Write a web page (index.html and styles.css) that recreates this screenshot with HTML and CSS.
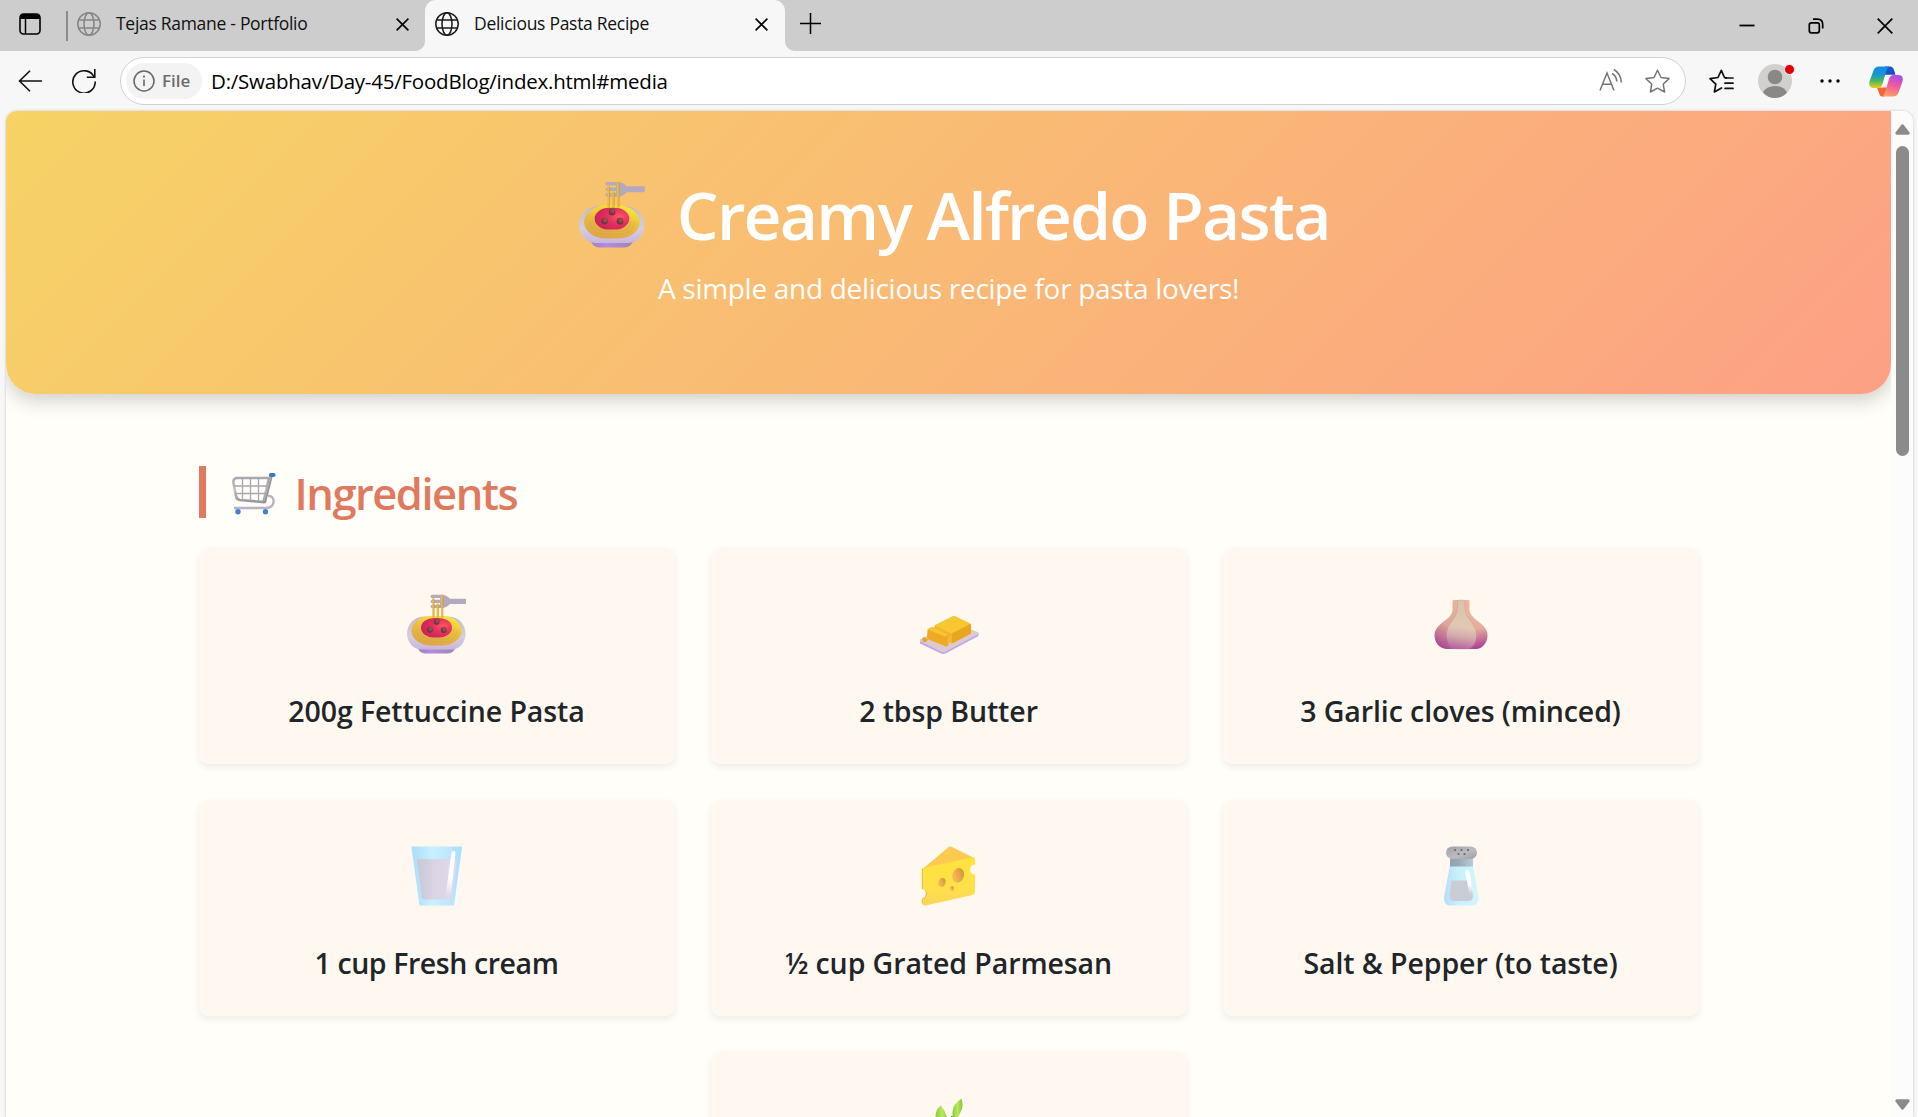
FILE: index.html
```html
<!DOCTYPE html>
<html lang="en">
<head>
<meta charset="utf-8">
<title>Delicious Pasta Recipe</title>
<link rel="stylesheet" href="styles.css">
</head>
<body>
<svg class="defs" width="0" height="0" aria-hidden="true">
  <defs>
    <linearGradient id="plate" x1="0" y1="0" x2="0" y2="1"><stop offset="0" stop-color="#c3bac9"/><stop offset=".6" stop-color="#d6cedf"/><stop offset="1" stop-color="#c9b6dc"/></linearGradient>
    <linearGradient id="base" x1="0" y1="0" x2="1" y2="0"><stop offset="0" stop-color="#9d7cc4"/><stop offset=".4" stop-color="#b48add"/><stop offset="1" stop-color="#9a85b4"/></linearGradient>
    <linearGradient id="noodle" x1=".4" y1="1" x2=".8" y2="0"><stop offset="0" stop-color="#dda646"/><stop offset=".5" stop-color="#e9bd42"/><stop offset="1" stop-color="#fdea32"/></linearGradient>
    <radialGradient id="sauce" cx=".72" cy=".4" r=".7"><stop offset="0" stop-color="#ff5567"/><stop offset=".5" stop-color="#e3305f"/><stop offset="1" stop-color="#cc2459"/></radialGradient>
    <radialGradient id="meat" cx=".6" cy=".35" r=".6"><stop offset="0" stop-color="#a05a50"/><stop offset="1" stop-color="#6d2f3a"/></radialGradient>
    <linearGradient id="metal" x1="0" y1="0" x2="0" y2="1"><stop offset="0" stop-color="#aaa7ad"/><stop offset=".5" stop-color="#c5c1c9"/><stop offset="1" stop-color="#99949d"/></linearGradient>
    <linearGradient id="garlicL" x1=".6" y1="0" x2=".3" y2="1"><stop offset="0" stop-color="#e8b39c"/><stop offset=".5" stop-color="#dda798"/><stop offset="1" stop-color="#a84493"/></linearGradient>
    <linearGradient id="garlicR" x1=".4" y1="0" x2=".5" y2="1"><stop offset="0" stop-color="#f0b79d"/><stop offset=".6" stop-color="#e6ad9b"/><stop offset="1" stop-color="#ad3f96"/></linearGradient>
    <linearGradient id="garlicM" x1=".55" y1="0" x2=".45" y2="1"><stop offset="0" stop-color="#d9c3a8"/><stop offset=".55" stop-color="#e2c8b3"/><stop offset=".75" stop-color="#d5a9ac"/><stop offset="1" stop-color="#b862a3"/></linearGradient>
    <linearGradient id="glass" x1="0" y1="0" x2="1" y2="0"><stop offset="0" stop-color="#a9dcfb"/><stop offset=".4" stop-color="#c8f0fe"/><stop offset=".75" stop-color="#bce8ff"/><stop offset="1" stop-color="#a6ddff"/></linearGradient>
    <linearGradient id="milk" x1="0" y1="0" x2="1" y2="0"><stop offset="0" stop-color="#c8c8d2"/><stop offset=".4" stop-color="#d9d3e4"/><stop offset="1" stop-color="#e0daea"/></linearGradient>
    <linearGradient id="shine" x1="0" y1="0" x2="0" y2="1"><stop offset="0" stop-color="#fff"/><stop offset=".6" stop-color="#fff"/><stop offset="1" stop-color="#fff" stop-opacity="0"/></linearGradient>
    <linearGradient id="cheese" x1="0" y1="0" x2="0" y2="1"><stop offset="0" stop-color="#ffe33c"/><stop offset=".6" stop-color="#ffe148"/><stop offset="1" stop-color="#fbd559"/></linearGradient>
    <linearGradient id="hole" x1="1" y1="0" x2="0" y2="1"><stop offset="0" stop-color="#c98a38"/><stop offset=".55" stop-color="#eead4c"/><stop offset="1" stop-color="#fcc566"/></linearGradient>
    <linearGradient id="cap" x1="0" y1="0" x2="1" y2="1"><stop offset="0" stop-color="#a3a1a8"/><stop offset=".55" stop-color="#bdbbc0"/><stop offset="1" stop-color="#98a0a9"/></linearGradient>
    <linearGradient id="neck" x1="0" y1="0" x2="1" y2="0"><stop offset="0" stop-color="#8fa3b1"/><stop offset=".4" stop-color="#96abba"/><stop offset="1" stop-color="#bccbd5"/></linearGradient>
    <linearGradient id="shaker" x1="0" y1="0" x2="1" y2="0"><stop offset="0" stop-color="#b7dcf9"/><stop offset=".4" stop-color="#c9effd"/><stop offset="1" stop-color="#d0f6ff"/></linearGradient>
    <linearGradient id="leaf" x1="0" y1="0" x2="1" y2="0"><stop offset="0" stop-color="#8ccd3d"/><stop offset=".5" stop-color="#b9e95e"/><stop offset="1" stop-color="#86c43c"/></linearGradient>
    <linearGradient id="cpBlue" x1="0" y1="0" x2="0" y2="1"><stop offset="0" stop-color="#188be6"/><stop offset=".35" stop-color="#1594d8"/><stop offset=".65" stop-color="#43b56b"/><stop offset="1" stop-color="#f0cd09"/></linearGradient>
    <linearGradient id="cpNavy" x1="0" y1="0" x2="1" y2="1"><stop offset="0" stop-color="#1b62d6"/><stop offset="1" stop-color="#1b44b8"/></linearGradient>
    <linearGradient id="cpPink" x1=".6" y1="0" x2=".3" y2="1"><stop offset="0" stop-color="#a64ef0"/><stop offset=".45" stop-color="#ee5a9c"/><stop offset="1" stop-color="#ffa066"/></linearGradient>

    <symbol id="pasta" viewBox="0 0 60 60">
      <path d="M25.500 .8H35Q39 .8 43 4.800H59V10H43Q39 14 35 14H25.500Q23.500 14 23.500 12.400T25.500 10.800H33V9H25.500Q23.500 9 23.500 7.400T25.500 5.800H33V4H25.500Q23.500 4 23.500 2.400T25.500 .8Z" fill="#b5a9bd"/>
      <path d="M7 50H52L46 57.500Q43.500 59.500 41 59.500H18Q15.500 59.500 13 57.500Z" fill="url(#base)"/>
      <path d="M17 22.500H41C52 22.500 58.500 31 58.500 39.500C58.500 48 53 55.500 44 55.500H14.500C6 55.500 0 48 0 39.500C0 31 6.500 22.500 17 22.500Z" fill="url(#plate)"/>
      <rect x="4.500" y="22" width="50" height="29.500" rx="20" ry="15" fill="url(#noodle)"/>
      <path d="M10 35C10 44 15 47.500 22 47.500H37C45 47.500 49.500 43 49.500 36M13 36C13 42 18 45 23 45H37C43 45 46.500 41 46.500 36" fill="none" stroke="#d39a3d" stroke-opacity=".45" stroke-width=".8"/>
      <g fill="none" stroke-width="1.700"><path d="M26.200 4V24M30.500 9.500V24M34.900 .5V24" stroke="#edbe35"/><path d="M27.300 5V23M31.600 10V23M36 1V23" stroke="#c1963c" stroke-width=".6"/></g>
      <rect x="14" y="24" width="31" height="19.500" rx="13" ry="9.750" fill="url(#sauce)"/>
      <g fill="url(#meat)"><circle cx="29.700" cy="27.700" r="3"/><circle cx="23" cy="35.800" r="3"/><circle cx="36.800" cy="36" r="3"/></g>
    </symbol>
  </defs>
</svg>

<div class="tabstrip">
  <svg class="workspace" width="22" height="22" viewBox="0 0 22 22"><rect x="1" y="1" width="20" height="20" rx="3.500" fill="none" stroke="#000" stroke-width="1.600"/><path d="M1 6V4Q1 1 4 1H18Q21 1 21 4V6Z"/><path d="M6.500 5V21" stroke="#000" stroke-width="1.500"/></svg>
  <span class="separator"></span>
  <div class="tab">
    <svg class="muted" width="24" height="24" viewBox="0 0 24 24" fill="none" stroke="currentColor" stroke-width="1.500"><circle cx="12" cy="12" r="11.200"/><ellipse cx="12" cy="12" rx="5" ry="11.200"/><path d="M1.500 8H22.500M1.500 16H22.500"/></svg>
    <span class="tab-title">Tejas Ramane - Portfolio</span>
    <svg class="close" width="13" height="13" viewBox="0 0 13 13"><path d="M.6 .6L12.400 12.400M12.400 .6L.6 12.400" stroke="#000" stroke-width="1.600"/></svg>
  </div>
  <div class="tab active">
    <svg width="24" height="24" viewBox="0 0 24 24" fill="none" stroke="#1b1b1b" stroke-width="1.500"><circle cx="12" cy="12" r="11.200"/><ellipse cx="12" cy="12" rx="5" ry="11.200"/><path d="M1.500 8H22.500M1.500 16H22.500"/></svg>
    <span class="tab-title">Delicious Pasta Recipe</span>
    <svg class="close" width="13" height="13" viewBox="0 0 13 13"><path d="M.6 .6L12.400 12.400M12.400 .6L.6 12.400" stroke="#000" stroke-width="1.600"/></svg>
  </div>
  <svg class="new-tab" width="21" height="21" viewBox="0 0 21 21"><path d="M10.500 0V21M0 10.500H21" stroke="#000" stroke-width="1.500"/></svg>
  <div class="window-controls">
    <svg width="16" height="16" viewBox="0 0 16 16"><path d="M.5 7.500H15.500" stroke="#000" stroke-width="1.800"/></svg>
    <svg width="16" height="16" viewBox="0 0 16 16" fill="none" stroke="#000" stroke-width="1.700"><rect x="1.300" y="4.800" width="10" height="10" rx="2"/><path d="M5 1.200H9.500Q14.700 1.200 14.700 6.500V10.500"/></svg>
    <svg width="16" height="16" viewBox="0 0 16 16"><path d="M.7 .7L15.300 15.300M15.300 .7L.7 15.300" stroke="#000" stroke-width="1.700"/></svg>
  </div>
</div>

<div class="toolbar">
  <svg class="back" width="24" height="24" viewBox="0 0 24 24" fill="none" stroke="#111" stroke-width="1.600"><path d="M24 12H1.500M12 1.800L1.500 12L12 22.200"/></svg>
  <svg class="reload" width="24" height="24" viewBox="0 0 24 24" fill="none" stroke="#111" stroke-width="1.600"><path d="M22.300 8.500A11.200 11.200 0 1 0 23.200 12.500"/><path d="M22.800 0V8.300H14.800"/></svg>
  <div class="address">
    <span class="scheme">
      <svg width="22" height="22" viewBox="0 0 22 22"><circle cx="11" cy="11" r="10" fill="none" stroke="#666" stroke-width="1.500"/><path d="M11 9.500V16" stroke="#666" stroke-width="1.600"/><circle cx="11" cy="6.600" r="1.100" fill="#666"/></svg>
      <span class="scheme-text">File</span>
    </span>
    <span class="url">D:/Swabhav/Day-45/FoodBlog/index.html#media</span>
    <svg class="aloud" width="24" height="24" viewBox="0 0 24 24" fill="none" stroke="#757575" stroke-width="1.500"><path d="M1 22.500L8 5L15 22.500M3.500 16.200H12.500"/><path d="M13 5.500Q17.500 8 17.800 13.500M14.800 1.500Q22 5.500 22.300 14.500"/></svg>
    <svg class="star" width="25" height="24" viewBox="0 0 25 24" fill="none" stroke="#757575" stroke-width="1.500" stroke-linejoin="round"><path d="M12.500 1.200L16 8.500L24 9.600L18.200 15.200L19.600 23L12.500 19.200L5.400 23L6.800 15.200L1 9.600L9 8.500Z"/></svg>
  </div>
  <svg class="favorites" width="25" height="24" viewBox="0 0 25 24" fill="none" stroke="#111" stroke-width="1.700" stroke-linejoin="round" stroke-linecap="round"><path d="M17.500 8.800L15.500 8.500L12.300 1.300L9 8.500L1 9.600L6.800 15.200L5.400 23L12.500 19"/><path d="M16.500 9H24M16 14.200H24M16 19.400H24"/></svg>
  <div class="avatar">
    <svg width="34" height="34" viewBox="0 0 34 34"><circle cx="17" cy="17" r="17" fill="#d2d0ce"/><circle cx="17" cy="13" r="7.300" fill="#8a8886"/><path d="M5 28.500Q8 22 17 22T29 28.500Q24 34 17 34T5 28.500Z" fill="#8a8886"/></svg>
    <span class="badge"></span>
  </div>
  <svg class="more" width="20" height="4" viewBox="0 0 20 4"><circle cx="2" cy="2" r="1.700"/><circle cx="10" cy="2" r="1.700"/><circle cx="18" cy="2" r="1.700"/></svg>
  <svg class="copilot" width="34" height="31" viewBox="0 0 34 31">
    <path d="M16 .5H21Q24 .5 25 4L26.500 8.800H16Z" fill="url(#cpNavy)"/>
    <path d="M8 21.500H18L15.500 30.500H13Q11 30.500 10 27Z" fill="#f2673a"/>
    <path d="M10 .5H20.500Q18.500 1 17.500 4L13.500 18Q12.300 22 8.500 22H5Q-1 22 .5 15.500L4.500 4.500Q6 .5 10 .5Z" fill="url(#cpBlue)"/>
    <path d="M24 30.500H12.500Q15 30 16 26.500L20 13Q21.200 9 25 9H29Q35 9 33.500 15.500L29.500 26.500Q28 30.500 24 30.500Z" fill="url(#cpPink)"/>
  </svg>
</div>

<div class="viewport">
  <main class="page">
    <header class="hero">
      <h1><svg class="hero-icon"><use href="#pasta"/></svg><span>Creamy Alfredo Pasta</span></h1>
      <p>A simple and delicious recipe for pasta lovers!</p>
    </header>
    <section class="ingredients">
      <h2>
        <svg class="cart" width="44" height="42" viewBox="0 0 44 42" fill="none">
          <path d="M2 35H34C40 35 42 31 41.500 27C41 24 38.500 22.500 36 23" stroke="#b9b1c4" stroke-width="2.400"/>
          <path d="M3.500 5H37L31.500 29L8 27Q4.500 26.500 4 23L1.500 10Q1 5 5 5Z" stroke="url(#metal)" stroke-width="2.600"/>
          <path d="M10.500 5V27M18.500 5V28M26.500 5V28M2 13H35M3 20.500H33" stroke="#aaa6af" stroke-width="1.300"/>
          <path d="M39.500 2L32.500 30" stroke="#96929a" stroke-width="3"/><path d="M38.500 4L32 28" stroke="#c3bfc7" stroke-width=".8"/>
          <rect x="37" y="0" width="6.500" height="4" rx="1.800" fill="#3e76c1"/><circle cx="6" cy="38.800" r="2.700" fill="#4181cf"/><circle cx="33.500" cy="38.800" r="2.700" fill="#4181cf"/>
        </svg><span>Ingredients</span>
      </h2>
      <div class="grid">
        <article class="card"><svg class="icon"><use href="#pasta"/></svg><h3>200g Fettuccine Pasta</h3></article>
        <article class="card"><svg class="icon" viewBox="0 0 60 60">
          <path d="M1 46.500V49.500L22 59.500Q24.500 60.500 27 59.300L59.500 42V39Z" fill="#c5a6ea"/>
          <path d="M1.500 45L34 30Q36 29 38 30L58.500 38Q60.500 39 58.500 40.500L26.500 57.500Q24.500 58.500 22 57.500L1.500 47.500Q0 46.500 1.500 45Z" fill="#dccbce"/>
          <path d="M15.500 31.500L33.500 22.500Q35 22 36.500 22.500L51 29.500Q52 30 52 31.500V39.500L33 49.500L30 48V43L16 37Z" fill="#f4b526"/>
          <path d="M15.500 31.500L33.500 22.500Q35 22 36.500 22.500L51 29.500L33 39.500L29 38Z" fill="#f8c832"/>
          <path d="M33 39.500L52 30V39.500L33 49.500Z" fill="#e8a620"/>
          <path d="M8.500 35.500L12 33.500Q13.500 33 15 33.700L28.500 40Q29.500 40.500 29.500 42V51.500L27 52.500L9.500 45.500Q8 45 8 43Z" fill="#f0a923"/>
          <path d="M8.500 35.500L12 33.500Q13.500 33 15 33.700L29 40.500L26 42.500Z" fill="#f8c537"/>
          <path d="M3 45L5 43L9 45.500L7 48H4Z" fill="#e7a133"/>
        </svg><h3>2 tbsp Butter</h3></article>
        <article class="card"><svg class="icon" viewBox="0 0 60 60">
          <path d="M21.500 7Q21.500 6 23 6H31L29 22L26 55H15C7 54 3.500 47 3.500 41.500C3.500 34 9.500 30 14 26.500C20 22 21.500 19 21.500 16Z" fill="url(#garlicL)"/>
          <path d="M29 6H37Q38.500 6 38.500 7V15C38.500 19 40.500 22 46 26.500C51 30.500 56.500 34 56.500 41.500C56.500 49 51 55 45 55H32Z" fill="url(#garlicR)"/>
          <path d="M26.500 7Q26.500 6 28 6H32.500Q34 6 34 7V14C34 25 45.500 29 45.500 41C45.500 49 41 55 36 55H25C20 55 15.500 49 15.500 41C15.500 29 26.500 25 26.500 14Z" fill="url(#garlicM)" stroke="#b9768a" stroke-opacity=".35" stroke-width=".7"/>
        </svg><h3>3 Garlic cloves (minced)</h3></article>
        <article class="card"><svg class="icon" viewBox="0 0 60 60">
          <path d="M4.500 1.500Q4.500 .5 5.500 .5H54Q55 .5 55 1.500L47 59.500H12.500Z" fill="url(#glass)"/>
          <path d="M10 14Q10 13 11.500 13H47.500Q50 13 50 14.500L44.500 52Q44 53.500 42 53.500H17Q15 53.500 14.800 52Z" fill="url(#milk)"/>
          <path d="M44.500 6.500Q45 5 47 5Q48.500 5 48.500 6.500L44 48Q43.500 50.500 41 50.500Q38.500 50.500 38.800 48Z" fill="url(#shine)"/>
        </svg><h3 class="narrow">1 cup Fresh cream</h3></article>
        <article class="card"><svg class="icon" viewBox="0 0 60 60">
          <path d="M3.500 23L29 1.500Q31 0 33 1L55 12L50 20Z" fill="#fdca51"/>
          <path d="M3 23Q3 22 4.500 21.700L54 11.200Q56 11 56 13V18.500Q51 19 51 23.500Q51 28 56 28.500V46Q56 48.500 53.500 49L6.500 59.500Q3 60 3 56.500V52.500Q7 51.500 7 47.500Q7 43.500 3 43Z" fill="url(#cheese)"/>
          <path d="M3.300 23V43M3.300 53V57" stroke="#dfae4b" stroke-width=".8"/><path d="M4 43.500Q10 45.500 6.500 51Q5.500 52.500 3.500 52.500Q7 51.500 7 47.500Q7 44.500 4 43.500Z" fill="#d69b40"/>
          <g fill="url(#hole)"><ellipse cx="39.200" cy="29.300" rx="5.800" ry="7.500" transform="rotate(18 39 29)"/><ellipse cx="23" cy="36.500" rx="3.500" ry="4.600" transform="rotate(18 23 36)"/><ellipse cx="33" cy="42.500" rx="1.900" ry="2.500"/></g>
        </svg><h3>½ cup Grated Parmesan</h3></article>
        <article class="card"><svg class="icon" viewBox="0 0 60 60">
          <path d="M19 19H42L47.500 51Q48 59.500 42 59.500H19Q12.500 59.500 13 51Z" fill="url(#shaker)"/>
          <path d="M21 34.500H37Q39.500 34.500 40 36L42 50Q42 55 37.500 55H23Q18.500 55 18.500 50.500L20 36Q20.300 34.500 21 34.500Z" fill="#c9cdd6"/>
          <path d="M34 25.500Q34 23.500 36 23.500T38.500 25.500L41.500 44Q42 50 38.500 48Z" fill="url(#shine)"/>
          <path d="M19 11H42V20.500H19Z" fill="url(#neck)"/><rect x="15" y=".5" width="31" height="12.500" rx="6.500" fill="url(#cap)"/>
          <g fill="#66656d"><circle cx="24" cy="4" r="1.100"/><circle cx="30.500" cy="4" r="1.100"/><circle cx="37" cy="4" r="1.100"/><circle cx="27.500" cy="8" r="1.100"/><circle cx="33.500" cy="8" r="1.100"/></g>
        </svg><h3>Salt &amp; Pepper (to taste)</h3></article>
        <article class="card"><svg class="icon" viewBox="0 0 60 60">
          <path d="M31 60Q31 38 33 18" fill="none" stroke="#3f7d34" stroke-width="2"/>
          <path d="M22 7.500Q15 13 17 20Q21 29 30 32Q29 16 22 7.500Z" fill="url(#leaf)"/>
          <path d="M42.500 .5Q34 6 33.500 14V28Q40 18 42.500 12Q44.500 7 42.500 .5Z" fill="url(#leaf)"/>
        </svg></article>
      </div>
    </section>
  </main>
  <div class="scrollbar">
    <svg width="15" height="11" viewBox="0 0 15 11"><path d="M6 1.200Q7.500 -.6 9 1.200L14.500 8.500Q15 10.800 13 10.800H2Q0 10.800 .5 8.500Z" fill="#8b8b8b"/></svg>
    <span class="thumb"></span>
    <svg class="down" width="15" height="11" viewBox="0 0 15 11"><path d="M6 9.800Q7.500 11.600 9 9.800L14.500 2.500Q15 .2 13 .2H2Q0 .2 .5 2.500Z" fill="#8b8b8b"/></svg>
  </div>
</div>
</body>
</html>
```
FILE: styles.css
```css
* { box-sizing: border-box; }
body {
  margin: 0;
  height: 1117px;
  overflow: hidden;
  display: flex;
  flex-direction: column;
  background: #f7f7f7;
  color: #212529;
  font-family: "Open Sans", "Noto Sans", sans-serif;
}
svg { flex: none; display: block; }
h1, h2, h3, p { margin: 0; }
.defs { position: absolute; }

.tabstrip {
  flex: none;
  height: 51px;
  display: flex;
  align-items: center;
  background: #cdcdcd;
}
.workspace { margin: 0 25px 3px 19px; }
.separator { width: 2px; height: 30px; background: #8b8b8b; }
.tab {
  width: 357px;
  height: 51px;
  padding: 0 16px 3px 9px;
  display: flex;
  align-items: center;
}
.tab.active {
  position: relative;
  width: 360px;
  padding: 0 17px 3px 10px;
  background: #f7f7f7;
  border-radius: 11px 11px 0 0;
}
.tab.active::before, .tab.active::after {
  content: "";
  position: absolute;
  bottom: 0;
  width: 10px;
  height: 10px;
}
.tab.active::before { left: -10px; background: radial-gradient(circle at 0 0, transparent 9.500px, #f7f7f7 10.500px); }
.tab.active::after { right: -10px; background: radial-gradient(circle at 100% 0, transparent 9.500px, #f7f7f7 10.500px); }
.muted { color: #858585; }
.tab-title {
  margin: 0 0 2px 15px;
  font-size: 17.500px;
  line-height: 24px;
  letter-spacing: -.29px;
  color: #111;
  white-space: nowrap;
}
.close { margin: 1px 0 0 auto; }
.new-tab { margin: 0 0 4px 15px; }
.window-controls { margin-left: auto; padding-right: 25px; display: flex; gap: 53px; }

.toolbar {
  flex: none;
  height: 60px;
  display: flex;
  align-items: center;
}
.back { margin-left: 18px; }
.reload { margin-left: 30px; }
.address {
  margin-left: 24px;
  width: 1566px;
  height: 48px;
  padding: 0 15px 0 5px;
  display: flex;
  align-items: center;
  background: #fff;
  border: 1.500px solid #d2d2d2;
  border-radius: 24px;
}
.scheme {
  width: 76px;
  height: 36px;
  padding-left: 7px;
  display: flex;
  align-items: center;
  gap: 7px;
  background: #f3f3f3;
  border-radius: 18px;
}
.scheme-text { margin-bottom: 1px; font-size: 17px; font-weight: 600; color: #6b6b6b; }
.url { margin-left: 9px; font-size: 20.500px; letter-spacing: -.23px; color: #000; white-space: nowrap; }
.aloud { margin: 0 22px 3px auto; }
.favorites { margin-left: 23px; }
.avatar { position: relative; margin-left: 24px; }
.badge { position: absolute; right: -3px; top: 0; width: 11px; height: 11px; border: 1px solid #f7f7f7; border-radius: 50%; background: #e30000; }
.more { margin-left: 28px; }
.copilot { margin-left: 29px; }

.viewport {
  flex: 1;
  min-height: 0;
  width: 1907px;
  margin-left: 6px;
  display: flex;
  overflow: hidden;
  background: #fffef9;
  border-radius: 11px 11px 0 0;
  box-shadow: 0 0 2px 1px #dedede;
}
.page { width: 1885px; overflow: hidden; }
.hero {
  height: 283px;
  padding-top: 63px;
  background: linear-gradient(135deg, #f6d365, #fda085);
  border-radius: 0 0 30px 30px;
  box-shadow: 0 6px 20px rgba(0, 0, 0, .2);
  color: #fff;
  text-align: center;
}
.hero h1 {
  padding-left: 11.500px;
  display: flex;
  justify-content: center;
  font-size: 66px;
  line-height: 80px;
  font-weight: 600;
  letter-spacing: -1.780px;
}
.hero-icon { width: 67px; height: 67px; margin: 7px 31px 0 0; }
.hero p { margin-top: 12px; font-size: 28px; line-height: 44px; letter-spacing: -.3px; }
.ingredients { width: 1500px; margin: 72px auto 0; }
.ingredients h2 {
  height: 52px;
  padding: 2px 0 0 26px;
  display: flex;
  align-items: center;
  border-left: 7px solid #e07a5f;
  color: #e07a5f;
  font-size: 43.500px;
  line-height: 52px;
  font-weight: 600;
  letter-spacing: -1.500px;
}
.cart { margin-top: 2px; }
.ingredients h2 span { margin: 1px 0 0 19px; }
.grid {
  margin-top: 30px;
  display: flex;
  flex-wrap: wrap;
  justify-content: center;
  gap: 36px;
}
.card {
  width: 476px;
  height: 216px;
  padding-top: 46px;
  background: #fff8f0;
  border-radius: 9px;
  box-shadow: 0 3px 7px rgba(0, 0, 0, .075);
  text-align: center;
}
.icon { width: 60px; height: 60px; margin: 0 auto; }
.card h3 { margin-top: 37px; font-size: 28.500px; line-height: 40px; font-weight: 600; letter-spacing: -.09px; }
.card .narrow { letter-spacing: -.42px; }
.scrollbar {
  width: 22px;
  padding: 13px 0 7px;
  display: flex;
  flex-direction: column;
  align-items: center;
  background: #fcfcfc;
}
.thumb { width: 13px; height: 310px; margin-top: 11px; border-radius: 7px; background: #8b8b8b; }
.down { margin-top: auto; }
```
